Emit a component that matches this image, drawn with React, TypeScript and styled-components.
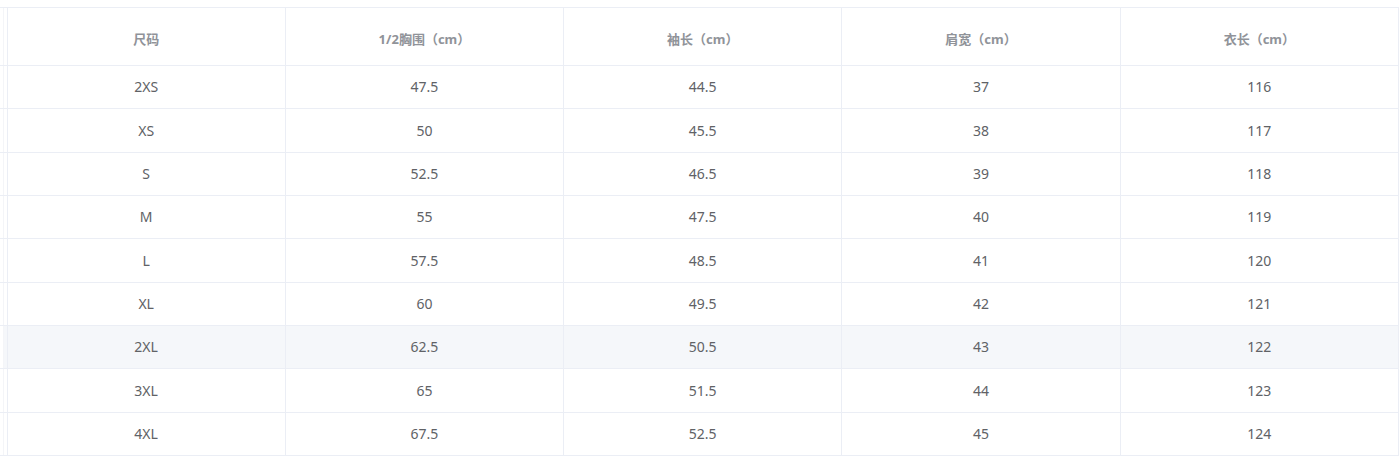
import React from 'react';
import styled, { createGlobalStyle } from 'styled-components';

const GlobalStyle = createGlobalStyle`
  body {
    margin: 0;
    padding-top: 7px;
    background: #fff;
    font-family: "Noto Sans", "Noto Sans CJK SC", sans-serif;
  }
`;

const columns = ['尺码', '1/2胸围（cm）', '袖长（cm）', '肩宽（cm）', '衣长（cm）'];

const rows = [
  ['2XS', '47.5', '44.5', '37', '116'],
  ['XS', '50', '45.5', '38', '117'],
  ['S', '52.5', '46.5', '39', '118'],
  ['M', '55', '47.5', '40', '119'],
  ['L', '57.5', '48.5', '41', '120'],
  ['XL', '60', '49.5', '42', '121'],
  ['2XL', '62.5', '50.5', '43', '122'],
  ['3XL', '65', '51.5', '44', '123'],
  ['4XL', '67.5', '52.5', '45', '124'],
];

const HOVER_ROW = 6;

const App: React.FC = () => {
  return (
    <>
      <GlobalStyle />
      <Table>
        <colgroup>
          <col style={{ width: 7 }} />
          {columns.map((c) => (
            <col key={c} />
          ))}
        </colgroup>
        <thead>
          <tr>
            <Gutter />
            {columns.map((c) => (
              <HeadCell key={c}>{c}</HeadCell>
            ))}
          </tr>
        </thead>
        <tbody>
          {rows.map((r, i) => (
            <Row key={r[0]} $hover={i === HOVER_ROW}>
              <Gutter />
              {r.map((v, j) => (
                <Cell key={j}>{v}</Cell>
              ))}
            </Row>
          ))}
        </tbody>
      </Table>
    </>
  );
};

export default App;

const Table = styled.table`
  width: 1399px;
  border-collapse: collapse;
  table-layout: fixed;
  font-size: 14px;
  color: #606266;
`;

const Gutter = styled.td`
  padding: 0;
  border-top: 1px solid #ebeef5;
  border-bottom: 1px solid #ebeef5;
  border-right: 1px solid #ebeef5;
  box-shadow: inset 3px 0 0 #fff, inset 4px 0 0 #f4f5f8;
`;

const HeadCell = styled.th`
  height: 58px;
  padding: 4px 0 0;
  box-sizing: border-box;
  border: 1px solid #ebeef5;
  color: #909399;
  font-weight: bold;
  font-size: 13px;
  text-align: center;
`;

const Row = styled.tr<{ $hover?: boolean }>`
  height: 43.35px;
  background: ${(p) => (p.$hover ? '#f5f7fa' : '#fff')};
`;

const Cell = styled.td`
  padding: 0;
  border: 1px solid #ebeef5;
  text-align: center;
  line-height: 20px;
`;
